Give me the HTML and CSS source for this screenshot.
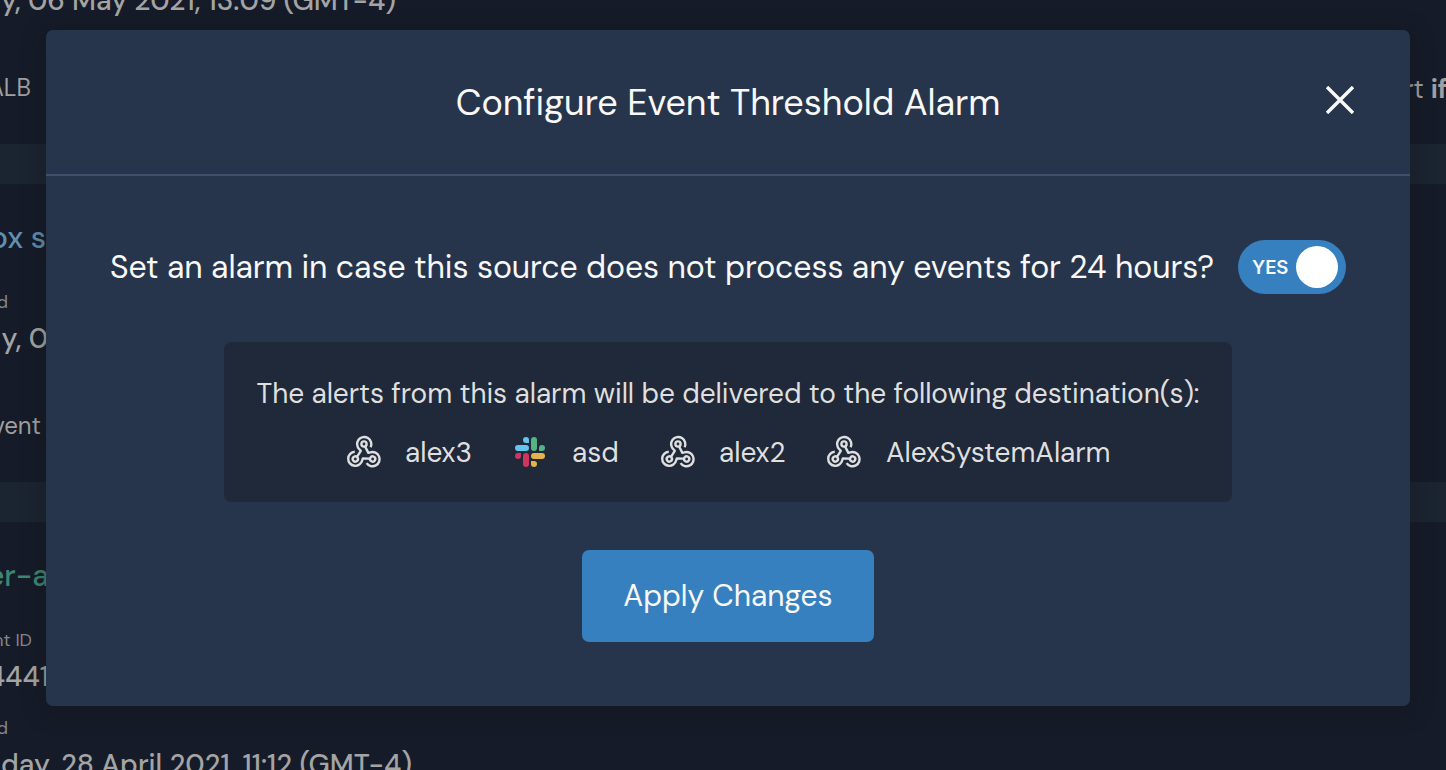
FILE: index.html
```html
<!DOCTYPE html>
<html lang="en">
<head>
<meta charset="utf-8">
<title>Configure Event Threshold Alarm</title>
<link rel="stylesheet" href="styles.css">
</head>
<body>
<svg class="defs" aria-hidden="true">
  <symbol id="webhook" viewBox="-1 -2 36 36">
    <g id="hook" fill="none" stroke="#dfdfdf" stroke-width="2.4" stroke-linejoin="round">
      <circle cx="17" cy="8" r="2.6"/>
      <path d="M23.6 11.2A7.1 7.1 0 1 0 12.4 13.3L13.8 14.8L10 20.8"/>
    </g>
    <use href="#hook" transform="rotate(120 17 18)"/>
    <use href="#hook" transform="rotate(240 17 18)"/>
  </symbol>
  <symbol id="slack" viewBox="-3 -3 36 36">
    <path fill="#63c4ec" d="M14 6h-3a3 3 0 1 1 3-3zM3 8h8a3 3 0 0 1 0 6H3a3 3 0 0 1 0-6z"/>
    <path fill="#57b382" d="M16 3a3 3 0 0 1 6 0v8a3 3 0 0 1-6 0zM24 14v-3a3 3 0 1 1 3 3z"/>
    <path fill="#d0355d" d="M6 16v3a3 3 0 1 1-3-3zM8 19a3 3 0 0 1 6 0v8a3 3 0 0 1-6 0z"/>
    <path fill="#e6b34b" d="M19 16h8a3 3 0 0 1 0 6h-8a3 3 0 0 1 0-6zM16 24h3a3 3 0 1 1-3 3z"/>
  </symbol>
</svg>
<main class="page">
  <section class="card first">
    <div class="line value to-date"><span>y, 06 May 2021, 13:09 (GMT-4)</span></div>
    <div class="row">
      <div class="line tag to-alb"><span>ALB</span></div>
      <div class="hint"><span>rt <b>if</b></span></div>
    </div>
  </section>
  <section class="card second">
    <div class="line name blue"><span>ox s</span></div>
    <div class="line label to-d"><span>d</span></div>
    <div class="line value to-zero"><span>y, 0</span></div>
    <div class="line tag to-event"><span>vent</span></div>
  </section>
  <section class="card third">
    <div class="line name green"><span>er-a</span></div>
    <div class="line label to-id"><span>nt ID</span></div>
    <div class="line value"><span>4441</span></div>
    <div class="line label to-d gap"><span>d</span></div>
    <div class="line value to-last"><span>sday, 28 April 2021, 11:12 (GMT-4)</span></div>
  </section>
</main>
<div class="modal" role="dialog">
  <header class="head">
    <h1 class="title">Configure Event Threshold Alarm</h1>
    <svg class="close" viewBox="0 0 28 28"><path d="M1 1L27 27M27 1L1 27" stroke="#f8f8f6" stroke-width="3.4"/></svg>
  </header>
  <div class="question">
    <span>Set an alarm in case this source does not process any events for 24 hours?</span>
    <div class="toggle"><span>YES</span><i class="knob"></i></div>
  </div>
  <div class="info">
    <p class="note">The alerts from this alarm will be delivered to the following destination(s):</p>
    <div class="dests">
      <div class="dest"><svg class="icon"><use href="#webhook"/></svg><span class="w66">alex3</span></div>
      <div class="dest"><svg class="icon"><use href="#slack"/></svg><span class="w48">asd</span></div>
      <div class="dest"><svg class="icon"><use href="#webhook"/></svg><span class="w66">alex2</span></div>
      <div class="dest"><svg class="icon"><use href="#webhook"/></svg><span class="w224">AlexSystemAlarm</span></div>
    </div>
  </div>
  <button class="apply">Apply Changes</button>
</div>
</body>
</html>
```
FILE: styles.css
```css
* { box-sizing: border-box; }
body {
  margin: 0;
  height: 770px;
  overflow: hidden;
  position: relative;
  background: #1b2431;
  font-family: "DM Sans", Inter, sans-serif;
  font-optical-sizing: none;
}
.defs { position: absolute; width: 0; height: 0; }

.page { display: flex; flex-direction: column; gap: 40px; height: 770px; overflow: hidden; }
.card { background: #151b28; flex: none; overflow: hidden; }
.first { height: 144px; }
.second { height: 298px; padding-top: 39px; }
.third { height: 248px; padding-top: 39px; }
.line {
  display: flex;
  justify-content: flex-end;
  width: 49px;
  height: 30px;
  line-height: 30px;
  white-space: nowrap;
}
.value { color: #a4a4a4; font-size: 28px; font-weight: 500; margin-top: 7px; }
.name { font-size: 30px; font-weight: 500; }
.blue { color: #5f8eae; width: 46px; }
.green { color: #408672; width: 49px; }
.label { color: #858585; font-size: 18px; margin-top: 34px; }
.tag { color: #a0a0a0; font-size: 24px; }
.to-date { width: 396px; margin-top: -14px; }
.to-alb { width: 31px; }
.to-d { width: 8px; }
.to-zero { width: 48px; }
.to-event { width: 41px; margin-top: 57px; }
.to-id { width: 32px; }
.gap { margin-top: 21px; }
.to-last { width: 412px; }
.row { display: flex; justify-content: space-between; margin-top: 57px; }
.hint {
  width: 42px;
  height: 32px;
  line-height: 32px;
  overflow: hidden;
  white-space: nowrap;
  color: #a0a0a0;
  font-size: 26px;
}

.modal {
  position: absolute;
  left: 46px;
  top: 30px;
  width: 1364px;
  height: 676px;
  border-radius: 7px;
  background: #27354c;
  color: #f8f8f6;
  box-shadow: 0 4px 24px rgba(20, 20, 20, 0.4);
  display: flex;
  flex-direction: column;
  align-items: center;
}
.head {
  width: 100%;
  height: 146px;
  border-bottom: 2px solid #424e6b;
  display: grid;
  grid-template-columns: 84px 1fr 84px;
  padding-top: 49px;
}
.title {
  grid-column: 2;
  margin: 0;
  text-align: center;
  font-size: 36px;
  font-weight: 400;
  line-height: 48px;
  letter-spacing: -0.06px;
}
.close { width: 28px; height: 28px; margin-top: 7px; }
.question {
  width: 1236px;
  height: 54px;
  margin-top: 64px;
  display: flex;
  align-items: center;
  justify-content: space-between;
  font-size: 32px;
  letter-spacing: -0.065px;
  white-space: nowrap;
}
.toggle {
  width: 108px;
  height: 54px;
  border-radius: 27px;
  background: #3680c0;
  display: flex;
  align-items: center;
  justify-content: space-between;
  padding: 0 8px 0 14px;
  font: 600 18.5px Inter, sans-serif;
}
.knob { width: 42px; height: 42px; border-radius: 50%; background: #fff; }
.info {
  width: 1008px;
  height: 160px;
  margin-top: 48px;
  padding-top: 31px;
  border-radius: 7px;
  background: #1f293a;
  color: #dfdfdf;
  font-size: 28px;
  line-height: 40px;
  letter-spacing: -0.05px;
}
.note { margin: 0; text-align: center; white-space: nowrap; line-height: 42px; }
.dests { display: flex; justify-content: center; gap: 40px; margin-top: 18px; }
.dest { display: flex; align-items: center; gap: 24px; }
.icon { width: 36px; height: 36px; margin-top: -2px; }
.w66 { width: 66px; text-indent: -1px; }
.w48 { width: 48px; }
.w224 { width: 224px; }
.apply {
  width: 292px;
  height: 92px;
  margin-top: 48px;
  padding: 0 0 2px;
  border: 0;
  border-radius: 7px;
  background: #3680c0;
  color: #f8f8f6;
  font-family: inherit;
  font-size: 30px;
}
```
